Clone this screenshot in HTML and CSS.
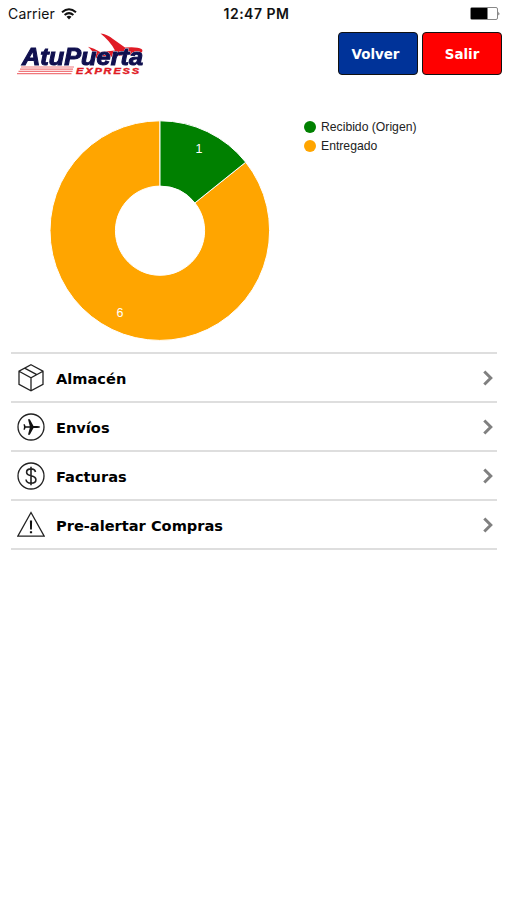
FILE: index.html
```html
<!DOCTYPE html>
<html lang="es">
  <head>
    <meta charset="UTF-8" />
    <meta name="viewport" content="width=device-width, initial-scale=1" />
    <title>AtuPuerta Express</title>
    <link rel="stylesheet" href="styles.css">
  </head>
  <body>
    <div class="status-bar">
      <div class="carrier">
        <span>Carrier</span>
        <svg class="wifi" width="16" height="12" viewBox="0 0 16 12" fill="none" stroke="#111" stroke-width="2">
          <path d="M1 4.3Q8-1.7 15 4.3M3.6 7Q8 3.3 12.4 7" />
          <path d="M5.5 8.8Q8 6.8 10.5 8.8L8 11.4Z" fill="#111" stroke="none" />
        </svg>
      </div>
      <span class="clock">12:47 PM</span>
      <svg class="battery" width="30" height="13" viewBox="0 0 30 13">
        <rect x=".5" y=".5" width="27" height="12" rx="1.5" fill="#fff" stroke="#888" />
        <path d="M1 1h16.5v11H1z" />
        <path d="M28.5 4.5q1.5 2 0 4z" fill="#333" />
      </svg>
    </div>

    <header class="header">
      <svg class="logo" width="130" height="44" viewBox="0 0 130 44">
        <path fill="#e01b25" d="M84.5 1.6C89 2 93 4 97 7L109 15.6Q121 14.5 125.5 17Q128 19 124 22L80 26Q78 20 72 14.8Q78 16 84 20L99 18.5Q94 9 84.5 1.6Z" />
        <text class="logo-name" x="6" y="33" textLength="121" lengthAdjust="spacingAndGlyphs">AtuPuerta</text>
        <path d="M5 35H58M4 37.2H57M2.5 39.4H56.5M1 41.6H55.5" stroke="#f0787c" stroke-width="1.2" />
        <text class="logo-tag" x="60" y="42" textLength="65" lengthAdjust="spacingAndGlyphs">EXPRESS</text>
      </svg>
      <nav class="actions">
        <button type="button" class="btn btn-back">Volver</button>
        <button type="button" class="btn btn-exit">Salir</button>
      </nav>
    </header>

    <main class="content">
      <section class="summary">
        <svg class="donut" width="220" height="220" viewBox="0 0 220 220">
          <g stroke="#fff" stroke-width="1">
            <path fill="#ffa500" d="M195.7 41.2A109.8 109.8 0 1 1 110 -.2V65.1A44.6 44.6 0 1 0 144.9 81.9Z" />
            <path fill="#008000" d="M110 -.2A109.8 109.8 0 0 1 195.7 41.2L144.9 81.9A44.6 44.6 0 0 0 110 65.1Z" />
          </g>
          <text x="149" y="32.4">1</text>
          <text x="70" y="196.4">6</text>
        </svg>
        <ul class="legend">
          <li><span class="dot dot-received"></span>Recibido (Origen)</li>
          <li><span class="dot dot-delivered"></span>Entregado</li>
        </ul>
      </section>

      <ul class="menu">
        <li class="menu-item">
          <svg class="menu-icon" viewBox="0 0 28 28">
            <path d="M14 .8L26 7.2V20.4L14 26.8L2 20.4V7.2ZM2 7.2L14 13.8L26 7.2M14 13.8V26.8M7.6 4.2L19.8 10.6" />
          </svg>
          <span>Almacén</span>
          <svg class="chevron" viewBox="0 0 10 16"><path d="M1.3 1.5L7.8 8L1.3 14.5" /></svg>
        </li>
        <li class="menu-item">
          <svg class="menu-icon" viewBox="0 0 28 28">
            <circle cx="14" cy="14" r="13" />
            <path class="solid" d="M23.3 14Q22.8 15.1 20 15.1H16.5L12.8 21.8H11L12.8 14.8H8.6L7.8 16.8H6.5L7 14L6.5 11.2H7.8L8.6 13.2H12.8L11 6.2H12.8L16.5 12.9H20Q22.8 12.9 23.3 14Z" />
          </svg>
          <span>Envíos</span>
          <svg class="chevron" viewBox="0 0 10 16"><path d="M1.3 1.5L7.8 8L1.3 14.5" /></svg>
        </li>
        <li class="menu-item">
          <svg class="menu-icon" viewBox="0 0 28 28">
            <circle cx="14" cy="14" r="13" />
            <path class="dollar" d="M18.5 10C18 7.8 16.5 6.9 14 6.9C11.2 6.9 9.6 8.2 9.6 10.2C9.6 12.5 11.3 13.1 14 13.8C17 14.5 18.9 15.3 18.9 17.7C18.9 20 17 21.2 14 21.2C11 21.2 9.3 20 9 17.5M14 4.8V23.2" />
          </svg>
          <span>Facturas</span>
          <svg class="chevron" viewBox="0 0 10 16"><path d="M1.3 1.5L7.8 8L1.3 14.5" /></svg>
        </li>
        <li class="menu-item">
          <svg class="menu-icon" viewBox="0 0 28 28">
            <path d="M14 1.5L27.2 25.2H.8Z" />
            <path class="solid" d="M12.9 9.5H15.1L14.9 18.5H13.1ZM12.9 20.2H15.1V22.3H12.9Z" />
          </svg>
          <span>Pre-alertar Compras</span>
          <svg class="chevron" viewBox="0 0 10 16"><path d="M1.3 1.5L7.8 8L1.3 14.5" /></svg>
        </li>
      </ul>
    </main>
  </body>
</html>
```
FILE: styles.css
```css
* {
  box-sizing: border-box;
  margin: 0;
  padding: 0;
}

body {
  min-height: 100vh;
  background: #fff;
  color: #000;
  font-family: "DejaVu Sans", Verdana, sans-serif;
}

ul {
  list-style: none;
}

.status-bar {
  display: grid;
  grid-template-columns: 1fr auto 1fr;
  align-items: center;
  height: 27px;
  padding: 0 7px 0 8px;
  color: #111;
  font-family: Inter, sans-serif;
  font-size: 14px;
}

.carrier {
  display: flex;
  align-items: center;
  gap: 6px;
  letter-spacing: 0.15px;
}

.clock {
  padding-left: 5px;
  font-weight: 600;
  letter-spacing: 0.5px;
}

.battery {
  justify-self: end;
}

.header {
  display: flex;
  justify-content: space-between;
  align-items: flex-start;
  padding: 5px 5px 0 16px;
  height: 94px;
}

.logo-name {
  fill: #10104f;
  stroke: #10104f;
  stroke-width: 1;
  font: italic bold 23px "Liberation Sans", Arial, sans-serif;
  filter: drop-shadow(0 0 0.6px #fff) drop-shadow(0 0 0.6px #fff);
}

.logo-tag {
  fill: #e01b25;
  stroke: #e01b25;
  stroke-width: 0.4;
  font: italic bold 9px "Liberation Sans", Arial, sans-serif;
  letter-spacing: 1.5px;
}

.actions {
  display: flex;
  gap: 4px;
}

.btn {
  width: 80px;
  height: 43px;
  padding-top: 2px;
  border: 1.5px solid #111;
  border-radius: 4px;
  color: #fff;
  font: bold 13.4px "DejaVu Sans", Verdana, sans-serif;
}

.btn-back {
  padding-right: 5px;
  background: #003399;
}

.btn-exit {
  background: #f00;
}

.content {
  padding: 0 10px 0 11px;
}

.summary {
  display: flex;
  align-items: flex-start;
  height: 231px;
  padding-left: 39px;
}

.donut {
  overflow: visible;
}

.donut text {
  fill: #fff;
  font: 12.5px "Liberation Sans", Arial, sans-serif;
  text-anchor: middle;
}

.legend {
  margin-left: 34px;
  color: #222;
  font: 12.2px "Liberation Sans", Arial, sans-serif;
}

.legend li {
  display: flex;
  align-items: center;
  gap: 5px;
  height: 19.6px;
  margin-top: -4px;
}

.legend li + li {
  margin-top: 0;
}

.dot {
  width: 12px;
  height: 12px;
  border-radius: 50%;
}

.dot-received {
  background: #008000;
}

.dot-delivered {
  background: #ffa500;
}

.menu {
  border-top: 2px solid #dedede;
}

.menu-item {
  display: flex;
  align-items: center;
  height: 48.9px;
  padding: 2px 4px 0 6px;
  border-bottom: 2px solid #dedede;
  font-size: 14.6px;
  font-weight: bold;
}

.menu-item span {
  flex: 1;
  padding-top: 1px;
}

.menu-icon {
  width: 28px;
  height: 28px;
  margin-right: 11px;
  fill: none;
  stroke: #222;
  stroke-width: 1.3;
}

.menu-icon .solid {
  fill: #111;
  stroke: none;
}

.menu-icon .dollar {
  stroke-width: 1.6;
}

.chevron {
  width: 10px;
  height: 16px;
  fill: none;
  stroke: #808080;
  stroke-width: 3;
}
```
